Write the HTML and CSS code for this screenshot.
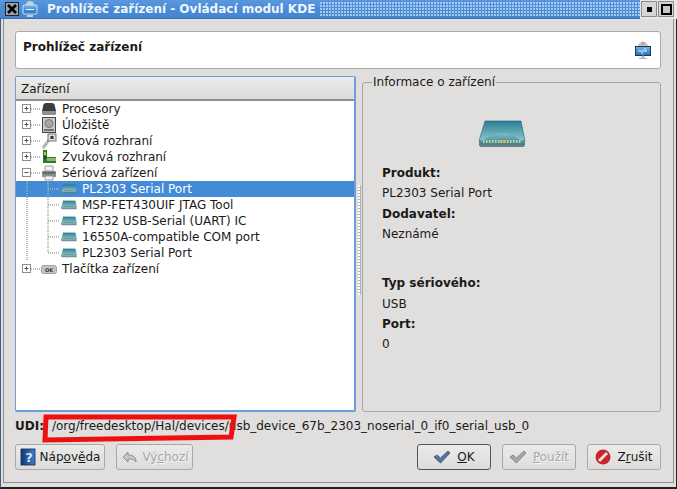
FILE: index.html
```html
<!DOCTYPE html>
<html lang="cs">
<head>
<meta charset="utf-8">
<title>Prohlížeč zařízení</title>
<link rel="stylesheet" href="styles.css">
</head>
<body>
<svg class="defs" width="0" height="0" aria-hidden="true">
  <defs>
    <linearGradient id="mTop" x1="0" y1="0" x2="0" y2="1"><stop offset="0" stop-color="#2a7f93"/><stop offset="1" stop-color="#8cc6d2"/></linearGradient>
    <linearGradient id="mBase" x1="0" y1="0" x2="0" y2="1"><stop offset="0" stop-color="#7fbcc9"/><stop offset="1" stop-color="#3c7f92"/></linearGradient>
    <symbol id="modem" viewBox="0 0 48 28">
      <path d="M7 1H43L47 21H1Z" fill="url(#mTop)" stroke="#1f6272" stroke-width=".6"/>
      <path d="M1 21C8 21 12 13 24 13S40 21 47 21V25H1Z" fill="url(#mBase)"/>
      <path d="M1 25H47L46 27H2Z" fill="#6d7f85"/>
      <path d="M5 21.500H43" stroke="#c9d987" stroke-width="3" stroke-dasharray="1.500 1.500"/>
      <path d="M22 21.500H28" stroke="#e6a030" stroke-width="3" stroke-dasharray="1.500 1.500"/>
    </symbol>
    <symbol id="exp-plus" viewBox="0 0 25 16">
      <path d="M15 8H25" class="dots"/>
      <rect x="6.500" y="3.500" width="8" height="8" fill="#fff" stroke="#8c8c8c"/>
      <path d="M8.500 7.500H12.500M10.500 5.500V9.500" stroke="#555" fill="none"/>
    </symbol>
    <symbol id="exp-minus" viewBox="0 0 25 16">
      <path d="M15 8H25" class="dots"/>
      <rect x="6.500" y="3.500" width="8" height="8" fill="#fff" stroke="#8c8c8c"/>
      <path d="M8.500 7.500H12.500" stroke="#555" fill="none"/>
    </symbol>
    <linearGradient id="help" x1="0" y1="0" x2="1" y2="0"><stop offset="0" stop-color="#123a74"/><stop offset="1" stop-color="#3f7fc9"/></linearGradient>
    <linearGradient id="usb" x1="0" y1="0" x2="0" y2="1"><stop offset="0" stop-color="#6fb6ec"/><stop offset="1" stop-color="#1f74c4"/></linearGradient>
  </defs>
</svg>
<div class="window">
  <header class="titlebar">
    <span class="tb-close"><svg width="10" height="10" viewBox="0 0 10 10"><path d="M1 1L9 9M9 1L1 9" stroke="#000" stroke-width="2.600"/></svg></span>
    <svg class="tb-icon" width="16" height="18" viewBox="0 0 16 18">
      <path d="M4 5A4 4 0 0 1 12 5Z" fill="#c9cdd0"/>
      <rect x="1" y="5" width="14" height="9" rx="1" fill="url(#usb)" stroke="#cfe0ee"/>
      <path d="M4 9.500H12" stroke="#e8f3fb"/>
      <rect x="5" y="15" width="6" height="2" fill="#c8cccf"/>
    </svg>
    <h1 class="tb-title">Prohlížeč zařízení - Ovládací modul KDE</h1>
    <span class="tb-grip"></span>
    <div class="tb-btns">
      <span class="tb-btn"><i class="tb-min"></i></span>
      <span class="tb-btn"><i class="tb-max"></i></span>
    </div>
  </header>
  <div class="frame">
    <section class="banner">
      <strong>Prohlížeč zařízení</strong>
      <svg width="18" height="22" viewBox="0 0 18 22">
        <path d="M4 8A5 5.500 0 0 1 14 8Z" fill="#c2c4c6"/>
        <circle cx="9" cy="4.500" r="1.200" fill="#d08a8a"/>
        <rect x="1.500" y="7.500" width="15" height="9" fill="url(#usb)" stroke="#26333d"/>
        <path d="M4.500 12H13M10 10H12M7 14H9" stroke="#eef6fc"/>
        <path d="M8 17H10V19H8ZM5 19.500H13" stroke="#b5b8ba" fill="#b5b8ba"/>
      </svg>
    </section>
    <div class="panes">
      <section class="tree">
        <div class="tree-head">Zařízení</div>
        <ul class="tree-body">
          <li class="row">
            <svg class="g-top"><use href="#exp-plus"/></svg>
            <svg class="ico" viewBox="0 0 16 16"><path d="M2.500 3.500Q3 2 5 2H11Q13 2 13.500 3.500L15 10H1Z" fill="#3c3c3c"/><path d="M1 10H15V13Q15 14 14 14H2Q1 14 1 13Z" fill="#8f8f8f"/></svg>
            <span>Procesory</span>
          </li>
          <li class="row">
            <svg class="g-top"><use href="#exp-plus"/></svg>
            <svg class="ico" viewBox="0 0 16 16"><rect x="1.500" y=".5" width="13" height="15" fill="#c9c9c9" stroke="#444"/><circle cx="8" cy="6.500" r="4" fill="#a8a8a8" stroke="#777"/><path d="M3 13H13" stroke="#555" stroke-width="1.500"/></svg>
            <span>Úložiště</span>
          </li>
          <li class="row">
            <svg class="g-top"><use href="#exp-plus"/></svg>
            <svg class="ico" viewBox="0 0 16 16"><path d="M2 15L8 7" stroke="#9a9a9a" stroke-width="3" stroke-dasharray="1.500 .5"/><rect x="7" y="1" width="8" height="7" fill="#dedede" stroke="#777"/><rect x="9.500" y="3" width="3" height="3" fill="#333"/></svg>
            <span>Síťová rozhraní</span>
          </li>
          <li class="row">
            <svg class="g-top"><use href="#exp-plus"/></svg>
            <svg class="ico" viewBox="0 0 16 16"><path d="M2 1H6V8H15V14H2Z" fill="#2c7a2c"/><path d="M6 9H15V12H6Z" fill="#8db86a"/><path d="M3 3H5V6H3Z" fill="#e0b040"/><path d="M3 7H5V10H3Z" fill="#1a4a1a"/></svg>
            <span>Zvuková rozhraní</span>
          </li>
          <li class="row">
            <svg class="g-top"><use href="#exp-minus"/></svg>
            <svg class="ico" viewBox="0 0 16 16"><path d="M4 1H12V6H4Z" fill="#f2f2f2" stroke="#888" stroke-width=".8"/><path d="M1 6H15V12H1Z" fill="#8d8f92"/><path d="M4 11H12V15H4Z" fill="#f5f5f5" stroke="#888" stroke-width=".8"/><path d="M2 8H14" stroke="#3d3f42"/></svg>
            <span>Sériová zařízení</span>
          </li>
          <li class="row sel">
            <svg class="g-child" viewBox="0 0 45 16"><path d="M11 0V16M32 0V16M32 8H44" class="dots"/></svg>
            <svg class="ico-m"><use href="#modem"/></svg>
            <span>PL2303 Serial Port</span>
          </li>
          <li class="row">
            <svg class="g-child" viewBox="0 0 45 16"><path d="M11 0V16M32 0V16M32 8H44" class="dots"/></svg>
            <svg class="ico-m"><use href="#modem"/></svg>
            <span>MSP-FET430UIF JTAG Tool</span>
          </li>
          <li class="row">
            <svg class="g-child" viewBox="0 0 45 16"><path d="M11 0V16M32 0V16M32 8H44" class="dots"/></svg>
            <svg class="ico-m"><use href="#modem"/></svg>
            <span>FT232 USB-Serial (UART) IC</span>
          </li>
          <li class="row">
            <svg class="g-child" viewBox="0 0 45 16"><path d="M11 0V16M32 0V16M32 8H44" class="dots"/></svg>
            <svg class="ico-m"><use href="#modem"/></svg>
            <span>16550A-compatible COM port</span>
          </li>
          <li class="row">
            <svg class="g-child" viewBox="0 0 45 16"><path d="M11 0V16M32 0V8H44" class="dots"/></svg>
            <svg class="ico-m"><use href="#modem"/></svg>
            <span>PL2303 Serial Port</span>
          </li>
          <li class="row">
            <svg class="g-top"><use href="#exp-plus"/></svg>
            <svg class="ico" viewBox="0 0 16 16"><rect x=".5" y="4.500" width="15" height="8" rx="2" fill="#c4c4c4" stroke="#a0a0a0"/><text x="8" y="10.500" class="ok-key">OK</text></svg>
            <span>Tlačítka zařízení</span>
          </li>
        </ul>
      </section>
      <div class="splitter"><i></i></div>
      <fieldset class="info">
        <legend>Informace o zařízení</legend>
        <svg class="info-icon"><use href="#modem"/></svg>
        <dl class="facts">
          <dt>Produkt:</dt><dd>PL2303 Serial Port</dd>
          <dt>Dodavatel:</dt><dd>Neznámé</dd>
        </dl>
        <dl class="facts second">
          <dt>Typ sériového:</dt><dd>USB</dd>
          <dt>Port:</dt><dd>0</dd>
        </dl>
      </fieldset>
    </div>
    <div class="udi"><b>UDI:</b><span>/org/freedesktop/Hal/devices/usb_device_67b_2303_noserial_0_if0_serial_usb_0</span></div>
    <footer class="buttons">
      <button class="btn w-help">
        <svg width="16" height="18" viewBox="0 0 16 18"><rect x="1" y="1" width="14" height="16" fill="url(#help)" stroke="#0e2a55" stroke-width=".8"/><text x="9" y="14" class="q">?</text></svg>
        <span>Náp<u>o</u>v<u>ě</u>da</span>
      </button>
      <button class="btn w-def off" disabled>
        <svg width="18" height="16" viewBox="0 0 18 16"><path d="M3 8L8 3V6C13 6 16 8 16 13C14 10 12 10 8 10V13Z" fill="#c9c9c9" stroke="#8d8d8d"/></svg>
        <span>Vý<u>c</u>hozí</span>
      </button>
      <span class="spacer"></span>
      <button class="btn w-act main">
        <svg width="18" height="14" viewBox="0 0 18 14"><path d="M1 7L4 5L7.500 8L15 1L17 3L7.500 13Z" fill="#52749f" stroke="#2e4a6e" stroke-width=".8"/></svg>
        <span><u>O</u>K</span>
      </button>
      <button class="btn w-act off" disabled>
        <svg width="18" height="14" viewBox="0 0 18 14"><path d="M1 7L4 5L7.500 8L15 1L17 3L7.500 13Z" fill="#a6a6a6" stroke="#7d7d7d" stroke-width=".8"/></svg>
        <span><u>P</u>oužít</span>
      </button>
      <button class="btn w-act">
        <svg width="16" height="16" viewBox="0 0 16 16"><circle cx="8" cy="8" r="7.500" fill="#c9252c"/><path d="M4 12L12 4" stroke="#f6dcdc" stroke-width="3"/></svg>
        <span>Z<u>r</u>ušit</span>
      </button>
    </footer>
  </div>
  <svg class="markup" width="200" height="32" viewBox="0 0 200 32"><path d="M6 5H194L191 25L5 28Z" fill="none" stroke="#ee1010" stroke-width="5"/></svg>
</div>
</body>
</html>
```
FILE: styles.css
```css
* { box-sizing: border-box; }
html, body { margin: 0; padding: 0; background: #e0dfdd; }
body { font: 12px/14px "DejaVu Sans", sans-serif; color: #1a1a1a; overflow: hidden; }
.defs { position: absolute; }
.window {
  position: relative;
  width: 677px;
  height: 489px;
  display: flex;
  flex-direction: column;
  background: #e0dfdd;
  border-right: 1px solid #222;
  border-bottom: 2px solid #222;
  border-left: 1px solid #3d5f8c;
}
.titlebar {
  height: 19px;
  flex: none;
  display: flex;
  align-items: center;
  margin-left: -1px;
  margin-right: -1px;
  background: linear-gradient(#5a98de, #4a8bd6 50%, #4585d0);
  border-bottom: 1px solid #3b6fae;
}
.tb-close {
  width: 14px;
  height: 14px;
  margin-left: 5px;
  display: flex;
  align-items: center;
  justify-content: center;
  background: #9aa3ad;
  border: 1px solid #222;
}
.tb-icon { margin-left: 3px; }
.tb-title {
  margin: 0 0 0 9px;
  font: bold 12px/16px "DejaVu Sans", sans-serif;
  color: #eef5fd;
  white-space: nowrap;
}
.tb-grip {
  flex: 1;
  height: 15px;
  margin: 0 0 0 5px;
  background-image: radial-gradient(circle at 1px 1px, #a9cbf0 0 .7px, transparent .9px);
  background-size: 3px 3px;
}
.tb-btns {
  width: 37px;
  height: 19px;
  flex: none;
  display: flex;
  align-items: center;
  gap: 1px;
  padding-left: 1px;
  background: #e8e8e6;
}
.tb-btn {
  width: 16px;
  height: 16px;
  display: flex;
  flex: none;
  align-items: center;
  justify-content: center;
  background: #d6d6d4;
  border: 1px solid #8b8b8b;
}
.tb-min { width: 5px; height: 5px; background: #000; }
.tb-max { width: 11px; height: 11px; background: #c9c9c9; border: 2px solid #000; }
.frame {
  flex: 1;
  display: flex;
  flex-direction: column;
  min-height: 0;
  margin: 0 2px 4px 2px;
  padding: 12px 12px 12px 11px;
  border: solid #8f8f8f;
  border-width: 0 1px 1px 1px;
}
.banner {
  height: 38px;
  flex: none;
  display: flex;
  align-items: center;
  justify-content: space-between;
  padding: 0 8px 6px 7px;
  background: #fff;
  border: 1px solid #aaa;
  border-radius: 3px;
}
.banner svg { margin-top: 6px; }
.panes {
  flex: 1;
  min-height: 0;
  margin-top: 7px;
  display: flex;
}
.tree {
  width: 341px;
  flex: none;
  display: flex;
  flex-direction: column;
  background: #fff;
  border: 2px solid #6a9fdc;
  border-radius: 2px;
  border-width: 1px 2px 2px 1px;
}
.tree-head {
  height: 24px;
  flex: none;
  padding: 4px 5px;
  line-height: 16px;
  background: linear-gradient(#ececea, #dcdbd9);
  border-bottom: 2px solid #8f8f8f;
}
.tree-body { list-style: none; margin: 0; padding: 0; flex: 1; }
.row {
  height: 16px;
  display: flex;
  align-items: center;
  white-space: nowrap;
}
.g-top { width: 25px; height: 16px; flex: none; }
.g-child { width: 45px; height: 16px; flex: none; }
.dots { fill: none; stroke: #777; stroke-dasharray: 1 1; }
.ico { width: 16px; height: 16px; flex: none; margin-right: 5px; }
.ico-m { width: 16px; height: 10px; flex: none; margin-right: 5px; }
.sel { background: #438ad7; color: #fff; }
.sel .dots { stroke: #d9c69c; }
.ok-key { font: bold 5px "DejaVu Sans", sans-serif; text-anchor: middle; fill: #333; }
.q { font: bold 13px "DejaVu Sans", sans-serif; text-anchor: middle; fill: #d7e8fb; }
.splitter {
  width: 6px;
  flex: none;
  display: flex;
  align-items: center;
  justify-content: center;
}
.splitter i {
  width: 3px;
  height: 110px;
  margin-top: -8px;
  background-image: radial-gradient(circle at 1px 1px, #fff 0 .8px, #b0b0ae 1px);
  background-size: 3px 3px;
}
.info {
  flex: 1;
  min-width: 0;
  margin: 0;
  padding: 0 0 0 19px;
  border: 1px solid #a5a5a3;
  border-radius: 3px;
}
.info legend { margin-left: -10px; padding: 0 1px; line-height: 12px; }
.info-icon { display: block; width: 48px; height: 28px; margin: 32px 0 0 96px; }
.facts { margin: 15px 0 0; line-height: 20.330px; }
.facts.second { margin-top: 29px; }
.facts dt { font-weight: bold; }
.facts dd { margin: 0; }
.udi {
  flex: none;
  height: 14px;
  margin-top: 7px;
  display: flex;
  gap: 8px;
  white-space: nowrap;
}
.buttons {
  flex: none;
  display: flex;
  gap: 11px;
  margin-top: 11px;
}
.spacer { flex: 1; margin-left: -11px; }
.btn {
  height: 26px;
  display: flex;
  align-items: center;
  justify-content: center;
  gap: 4px;
  padding: 0;
  font: 12px/14px "DejaVu Sans", sans-serif;
  color: #1a1a1a;
  background: linear-gradient(#eaeae8, #dddcda);
  border: 1px solid #a8a8a6;
  border-radius: 3px;
}
.btn.main { border-color: #555; }
.btn.off { color: #a8a8a6; text-shadow: 1px 1px 0 #f4f4f4; }
.w-help { width: 90px; }
.w-def { width: 77px; }
.w-act { width: 74px; gap: 6px; }
.markup { position: absolute; left: 39px; top: 412px; }
```
